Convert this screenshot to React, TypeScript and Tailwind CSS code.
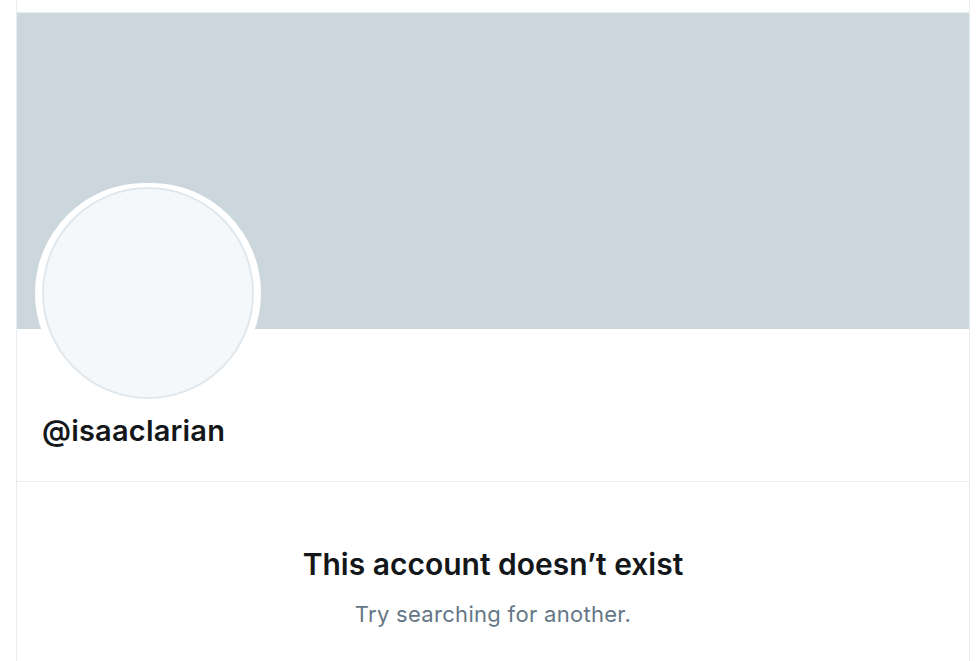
export default function App() {
  return (
    <div className="min-h-screen bg-white font-['Inter','Liberation_Sans',Arial,sans-serif] text-[#14171a]">
      <div className="ml-[16px] min-h-screen w-[954px] border-x border-[#e6ecf0] pt-[12px]">
        {/* Banner */}
        <div className="h-[317px] border-t border-[#e6ecf0] bg-[#ccd6dd]" />

        {/* Profile head */}
        <div className="px-[18px]">
          <div className="-mt-[146px] flex h-[220px] w-[226px] items-center justify-center rounded-full bg-white">
            <div className="h-[212px] w-[212px] rounded-full border-2 border-[#e1e8ed] bg-[#f5f8fa]" />
          </div>
          <div className="pb-[33px] pl-[7px] pt-[11px] text-[29px] font-semibold leading-[34px] tracking-[0.2px]">@isaaclarian</div>
        </div>

        {/* Empty state */}
        <div className="flex flex-col items-center border-t border-[#e6ecf0] pt-[64px]">
          <h2 className="text-[30px] font-semibold leading-[36px]">This account doesn’t exist</h2>
          <p className="mt-[18px] text-[22px] leading-[28px] tracking-[0.3px] text-[#657786]">Try searching for another.</p>
        </div>
      </div>
    </div>
  );
}
